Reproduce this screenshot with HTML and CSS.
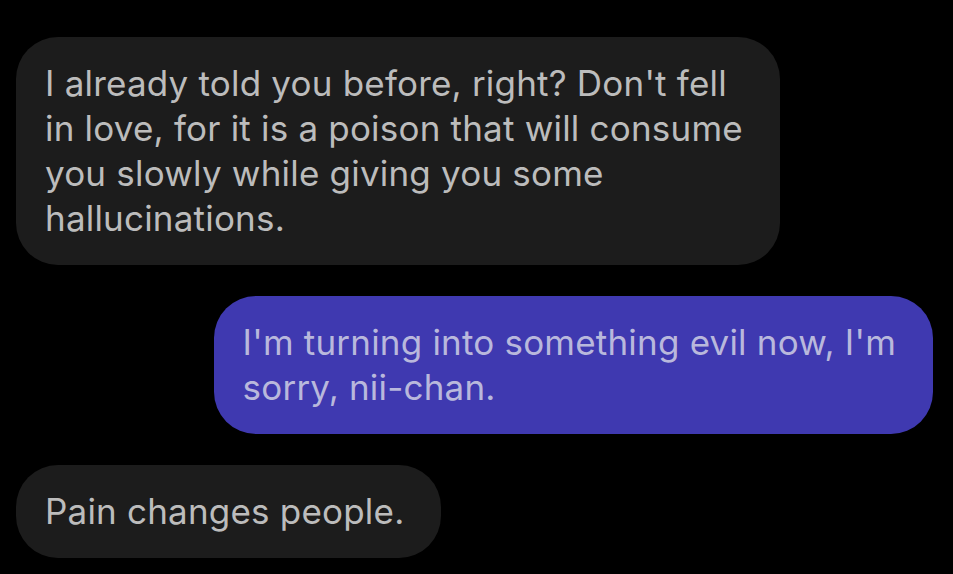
FILE: index.html
```html
<!DOCTYPE html>
<html lang="en">
<head>
<meta charset="utf-8">
<title>Chat</title>
<link rel="stylesheet" href="styles.css">
</head>
<body>
<div class="chat">
  <div class="bubble in">I already told you before, right? Don't fell<br>in love, for it is a poison that will consume<br>you slowly while giving you some<br>hallucinations.</div>
  <div class="bubble out">I'm turning into something evil now, I'm<br>sorry, nii-chan.</div>
  <div class="bubble in">Pain changes people.</div>
</div>
</body>
</html>
```
FILE: styles.css
```css
html, body {
  margin: 0;
  padding: 0;
  background: #000;
}
.chat {
  display: flex;
  flex-direction: column;
  gap: 31px;
  padding: 37px 20px 16px 16px;
  font-family: Inter, Roboto, "Liberation Sans", sans-serif;
  font-size: 35px;
  line-height: 45px;
  letter-spacing: 0.2px;
}
.bubble {
  width: fit-content;
  padding: 24px 37px 24px 29px;
  border-radius: 42px;
  white-space: nowrap;
}
.in {
  align-self: flex-start;
  background: #1c1c1c;
  color: #bcbcbc;
}
.out {
  align-self: flex-end;
  background: #3f39b0;
  color: #b9b8dc;
}
```
